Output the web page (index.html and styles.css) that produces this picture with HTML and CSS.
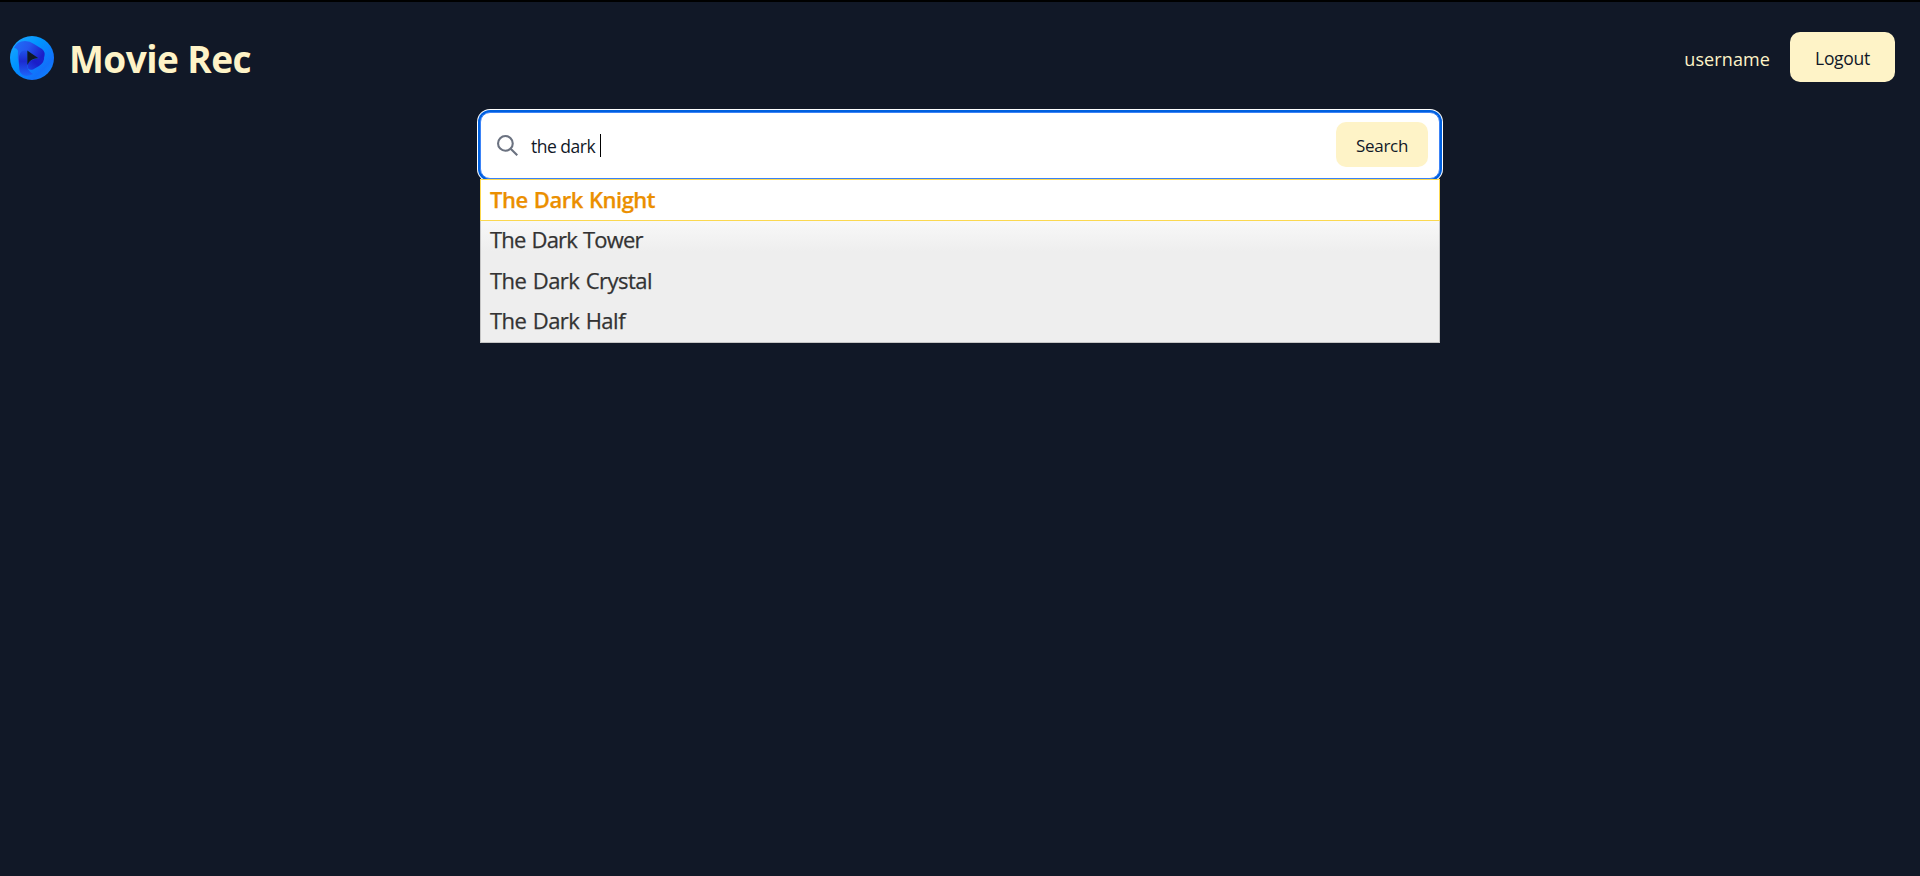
FILE: index.html
```html
<!DOCTYPE html>
<html lang="en">
<head>
<meta charset="utf-8">
<title>Movie Rec</title>
<link rel="stylesheet" href="styles.css">
</head>
<body>
<header class="navbar">
  <a class="brand">
    <svg class="logo" viewBox="0 0 44 44" aria-hidden="true">
      <defs>
        <linearGradient id="disc" x1="0" y1="0" x2="1" y2="1"><stop offset="0" stop-color="#22aaff"/><stop offset=".4" stop-color="#0094ff"/><stop offset=".75" stop-color="#1270fa"/><stop offset="1" stop-color="#0a8cff"/></linearGradient>
        <linearGradient id="top" x1="0" y1="0" x2="1" y2=".4"><stop offset="0" stop-color="#1c70f8"/><stop offset=".5" stop-color="#2456ee"/><stop offset="1" stop-color="#1a1ec8"/></linearGradient>
        <linearGradient id="stem" x1="0" y1="0" x2="0" y2="1"><stop offset="0" stop-color="#1f58ee"/><stop offset=".45" stop-color="#1c2bd0"/><stop offset="1" stop-color="#1d64f8"/></linearGradient>
        <linearGradient id="low" x1="0" y1="1" x2="1" y2="0"><stop offset="0" stop-color="#1d42e4"/><stop offset=".5" stop-color="#1a1ec8"/><stop offset="1" stop-color="#1b22cc"/></linearGradient>
      </defs>
      <circle cx="22" cy="22" r="22" fill="url(#disc)"/>
      <path d="M9 20Q9 13 14 13Q17 13 17.500 16V31Q18 35 23 38Q14 43 10 36Q9 33 9 29Z" fill="url(#stem)"/>
      <path d="M4 12Q7 5 15 5Q20 5 24 8L32 13Q36 16 34 22Q32 25 29 23L18 15Q11 13 9 20V29Q7 22 8 15Q7 12 4 12Z" fill="url(#top)"/>
      <path d="M34 20Q35 26 29 30L23 33.500Q18 35 17.500 30V28Q20 23 28 22.500Q33 23 34 20Z" fill="url(#low)"/>
      <path d="M17.300 14.500L28.500 22.300Q20 22.500 17.300 29Z" fill="#111827"/>
    </svg>
    <span class="title">Movie Rec</span>
  </a>
  <div class="account">
    <span class="username">username</span>
    <button class="button logout">Logout</button>
  </div>
</header>
<main class="search">
  <form class="field">
    <svg class="glass" viewBox="0 0 20 20" fill="none" aria-hidden="true"><path d="M19.300 19.300L13 13M15 8A7 7 0 1 1 1 8a7 7 0 0 1 14 0z" stroke="#6b7280" stroke-width="2"/></svg>
    <span class="query">the dark</span><span class="caret"></span>
    <button class="button submit" type="button">Search</button>
  </form>
  <ul class="suggestions">
    <li class="item active"><span class="name">The Dark Knight</span></li>
    <li class="item tower"><span class="name">The Dark Tower</span></li>
    <li class="item"><span class="name">The Dark Crystal</span></li>
    <li class="item"><span class="name">The Dark Half</span></li>
  </ul>
</main>
</body>
</html>
```
FILE: styles.css
```css
* { box-sizing: border-box; }
body {
  margin: 0;
  min-height: 876px;
  border-top: 2px solid #000;
  background: #111827;
  font-family: "Open Sans", "Noto Sans", sans-serif;
}
.navbar {
  display: flex;
  justify-content: space-between;
  align-items: center;
  height: 110px;
  padding: 0 25px 0 10px;
}
.brand { display: flex; align-items: center; gap: 15px; }
.logo { width: 44px; height: 44px; margin-top: 2px; }
.title {
  padding-top: 4px;
  color: #fef3c7;
  font-size: 37px;
  font-weight: 700;
  line-height: 44px;
  letter-spacing: -0.55px;
}
.account { display: flex; align-items: center; gap: 20px; }
.username { padding-top: 3px; color: #fef3c7; font-size: 18px; letter-spacing: 0.1px; }
.button {
  border: 0;
  background: #fef3c7;
  color: #111827;
  font-family: inherit;
  padding: 0;
}
.logout { width: 105px; height: 50px; padding-top: 2px; border-radius: 10px; font-size: 17.5px; letter-spacing: -0.3px; }
.search { width: 960px; margin: 0 auto; }
.field {
  display: flex;
  align-items: center;
  height: 67px;
  padding: 0 11px 0 16px;
  border: 1px solid #3b82f6;
  border-radius: 10px;
  background: #fff;
  box-shadow: 0 0 0 2px #0060df, 0 0 0 3px #fff;
}
.glass { width: 21px; height: 21px; }
.query { padding-top: 1px; margin-left: 13px; color: #111827; font-size: 17.5px; letter-spacing: -0.5px; }
.caret { width: 1px; height: 23px; margin-left: 5px; background: #000; }
.submit { width: 92px; height: 45px; padding-top: 1px; margin-left: auto; margin-bottom: 2px; border-radius: 10px; font-size: 17px; letter-spacing: -0.3px; }
.suggestions {
  position: relative;
  height: 164px;
  margin: 0;
  padding: 0;
  list-style: none;
  border: 1px solid #c5c5c5;
  border-top: 0;
  background: linear-gradient(#f8f8f8 42px, #eee 72px);
}
.item {
  height: 40.5px;
  padding-left: 9px;
  color: #333;
  font-size: 22px;
  line-height: 36.5px;
  letter-spacing: -0.5px;
  word-spacing: 1px;
  -webkit-text-stroke: 0.25px currentColor;
}
.tower { letter-spacing: -0.8px; }
.active {
  height: 42px;
  margin: 0 -1px;
  padding-left: 9px;
  border: 1px solid #fbd850;
  background: #fff;
  color: #eb8f00;
  font-weight: 600;
  line-height: 39px;
  letter-spacing: -0.5px;
  word-spacing: 1px;
}
```
